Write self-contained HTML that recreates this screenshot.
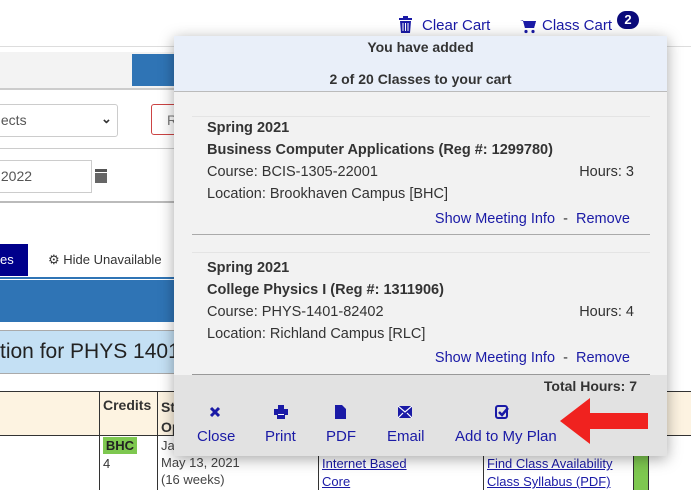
<!DOCTYPE html><html><head><style>
body{margin:0;width:691px;height:490px;overflow:hidden;background:#fff;font-family:"Liberation Sans",sans-serif;position:relative}
.a{position:absolute}
.lnk{color:#1a1aa6}
</style></head><body>
<div class="a" style="left:0;top:46px;width:691px;height:1px;background:#ddd"></div>
<div class="a" style="left:0;top:52px;width:180px;height:36px;background:#f3f3f3;border-bottom:2px solid #ccc"></div>
<div class="a" style="left:132px;top:54px;width:48px;height:32px;background:#2f74b5"></div>
<div class="a" style="left:-4px;top:104px;width:120px;height:31px;border:1px solid #ccc;border-radius:3px;background:#fff;font-size:14px;color:#555;line-height:31px">&nbsp;ects<span style="position:absolute;left:104px;top:-2px;font-size:13px;color:#333;font-weight:bold">&#8964;</span></div>
<div class="a" style="left:151px;top:104px;width:40px;height:31px;border:1px solid #c44;border-radius:3px;font-size:14px;color:#777;line-height:31px;padding-left:15px;box-sizing:border-box">R</div>
<div class="a" style="left:0;top:148px;width:180px;height:1px;background:#ccc"></div>
<div class="a" style="left:-4px;top:160px;width:94px;height:31px;border:1px solid #ccc;background:#fff;font-size:14px;color:#555;line-height:31px">&nbsp;2022</div>
<div class="a" style="left:95px;top:169px;width:12px;height:3px;background:#555"></div>
<div class="a" style="left:95px;top:173px;width:12px;height:10px;background:#666"></div>
<div class="a" style="left:0;top:201px;width:180px;height:2px;background:#bbb"></div>
<div class="a" style="left:0;top:244px;width:28px;height:32px;background:#00008b;color:#fff;font-size:13px;line-height:32px">es</div>
<div class="a" style="left:48px;top:244px;font-size:13px;color:#333;line-height:32px">&#9881; Hide Unavailable</div>
<div class="a" style="left:0;top:277px;width:180px;height:2px;background:#2f74b5"></div>
<div class="a" style="left:0;top:280px;width:180px;height:42px;background:#2f74b5"></div>
<div class="a" style="left:0;top:330px;width:180px;height:42px;background:#c4e0f4;border-top:1px solid #aaa;border-bottom:1px solid #aaa;font-size:21px;color:#222;line-height:42px">tion for PHYS 1401</div>
<div class="a" style="left:0;top:391px;width:691px;height:43px;background:#fdf3e1;border-top:1px solid #333;border-bottom:1px solid #333"></div>
<div class="a" style="left:99px;top:391px;width:1px;height:99px;background:#333"></div>
<div class="a" style="left:157px;top:391px;width:1px;height:99px;background:#333"></div>
<div class="a" style="left:103px;top:397px;font-size:14px;font-weight:bold;color:#333">Credits</div>
<div class="a" style="left:161px;top:397px;font-size:14px;font-weight:bold;color:#333;line-height:20px">St<br>Op</div>
<div class="a" style="left:103px;top:437px;width:34px;height:17px;background:#7ec850;font-size:13px;font-weight:bold;color:#222;text-align:center;line-height:17px">BHC</div>
<div class="a" style="left:103px;top:456px;font-size:13px;color:#333">4</div>
<div class="a" style="left:161px;top:437px;font-size:13px;color:#444;line-height:17px">Ja<br>May 13, 2021<br>(16 weeks)</div>
<div class="a" style="left:318px;top:391px;width:1px;height:99px;background:#333"></div>
<div class="a" style="left:322px;top:455px;font-size:13px;line-height:18px"><u style="color:#1a1aa6">Internet Based</u><br><u style="color:#1a1aa6">Core</u></div>
<div class="a" style="left:483px;top:391px;width:1px;height:99px;background:#333"></div>
<div class="a" style="left:487px;top:455px;font-size:13px;line-height:18px"><u style="color:#1a1aa6">Find Class Availability</u><br><u style="color:#1a1aa6">Class Syllabus (PDF)</u></div>
<div class="a" style="left:633px;top:434px;width:14px;height:56px;background:#7ec850;border-left:1px solid #333;border-right:1px solid #333"></div>

<svg class="a" style="left:399px;top:16px" width="13" height="17" viewBox="0 0 13 17"><rect x="0" y="2" width="13" height="2" fill="#1a1aa6"/><rect x="4" y="0" width="5" height="2" fill="#1a1aa6"/><path d="M1 5h11l-1 12H2z" fill="#1a1aa6"/><path d="M4 7v8M6.5 7v8M9 7v8" stroke="#fff" stroke-width="1"/></svg>
<div class="a lnk" style="left:422px;top:17px;font-size:15px">Clear Cart</div>
<svg class="a" style="left:520px;top:19px" width="16" height="15" viewBox="0 0 16 15"><path d="M0 1h3l2 8h9l2-7H4" fill="#1a1aa6"/><path d="M3 2h13l-2 7H5z" fill="#1a1aa6"/><circle cx="6" cy="12.5" r="1.6" fill="#1a1aa6"/><circle cx="13" cy="12.5" r="1.6" fill="#1a1aa6"/></svg>
<div class="a lnk" style="left:542px;top:17px;font-size:15px">Class Cart</div>
<div class="a" style="left:617px;top:11px;width:22px;height:18px;border-radius:10px;background:#0a0a7a;color:#fff;font-size:13px;font-weight:bold;text-align:center;line-height:18px">2</div>

<div class="a" style="left:174px;top:36px;width:493px;height:420px;background:#f2f2f2;box-shadow:0 3px 14px rgba(0,0,0,.35)">
<div style="height:55px;background:#e9eff9;border-bottom:1px solid #bbb;text-align:center;font-size:14px;font-weight:bold;color:#333;line-height:22px;padding-top:0">You have added<br><span style="position:relative;top:10px">2 of 20 Classes to your cart</span></div>
<div class="a" style="left:18px;top:80px;width:458px;height:1px;background:#e4e4e4"></div>
<div class="a" style="left:33px;top:81px;font-size:14.5px;color:#333;line-height:22px;width:427px">
<b>Spring 2021</b><br><b>Business Computer Applications (Reg #: 1299780)</b><br>Course: BCIS-1305-22001<span style="float:right">Hours: 3</span><br>Location: Brookhaven Campus [BHC]<br><div style="text-align:right;margin-top:3px;margin-right:4px" class="lnk">Show Meeting Info &nbsp;<span style="color:#333">-</span>&nbsp; Remove</div></div>
<div class="a" style="left:18px;top:198px;width:458px;height:1px;background:#aaa"></div>
<div class="a" style="left:18px;top:216px;width:458px;height:1px;background:#e4e4e4"></div>
<div class="a" style="left:33px;top:221px;font-size:14.5px;color:#333;line-height:22px;width:427px">
<b>Spring 2021</b><br><b>College Physics I (Reg #: 1311906)</b><br>Course: PHYS-1401-82402<span style="float:right">Hours: 4</span><br>Location: Richland Campus [RLC]<br><div style="text-align:right;margin-top:2px;margin-right:4px" class="lnk">Show Meeting Info &nbsp;<span style="color:#333">-</span>&nbsp; Remove</div></div>
<div class="a" style="left:0;top:339px;width:493px;height:81px;background:#e2e2e2"></div>
<div class="a" style="left:18px;top:338px;width:458px;height:1px;background:#999"></div>
<div class="a" style="right:30px;top:342px;font-size:14px;font-weight:bold;color:#333">Total Hours: 7</div>
<div class="a lnk" style="left:23px;top:392px;font-size:15px">Close</div>
<div class="a lnk" style="left:91px;top:392px;font-size:15px">Print</div>
<div class="a lnk" style="left:152px;top:392px;font-size:15px">PDF</div>
<div class="a lnk" style="left:213px;top:392px;font-size:15px">Email</div>
<div class="a lnk" style="left:281px;top:392px;font-size:15px">Add to My Plan</div>
<svg class="a" style="left:35px;top:370px" width="12" height="12"><path d="M2 2l8 8M10 2l-8 8" stroke="#1a1aa6" stroke-width="3"/></svg>
<svg class="a" style="left:100px;top:369px" width="14" height="14"><rect x="4" y="0" width="6" height="4" fill="#1a1aa6"/><rect x="0" y="4" width="14" height="6" fill="#1a1aa6"/><rect x="3" y="8" width="8" height="6" fill="#1a1aa6"/><rect x="4" y="9" width="6" height="1" fill="#fff"/></svg>
<svg class="a" style="left:161px;top:369px" width="11" height="14"><path d="M0 0h7l4 4v10H0z" fill="#1a1aa6"/></svg>
<svg class="a" style="left:224px;top:370px" width="14" height="12"><rect width="14" height="12" fill="#1a1aa6"/><path d="M0 0l7 6 7-6M0 12l5-5M14 12l-5-5" stroke="#fff" stroke-width="1.2" fill="none"/></svg>
<svg class="a" style="left:321px;top:369px" width="14" height="14"><rect x="1" y="1" width="11" height="12" rx="2" fill="none" stroke="#1a1aa6" stroke-width="2"/><path d="M4 7l3 3 6-7" stroke="#1a1aa6" stroke-width="2.5" fill="none"/></svg>
</div>
<svg class="a" style="left:560px;top:398px" width="90" height="46"><path d="M0 23L30 0v15h58v16H30v15z" fill="#f0221f"/></svg>
</body></html>
